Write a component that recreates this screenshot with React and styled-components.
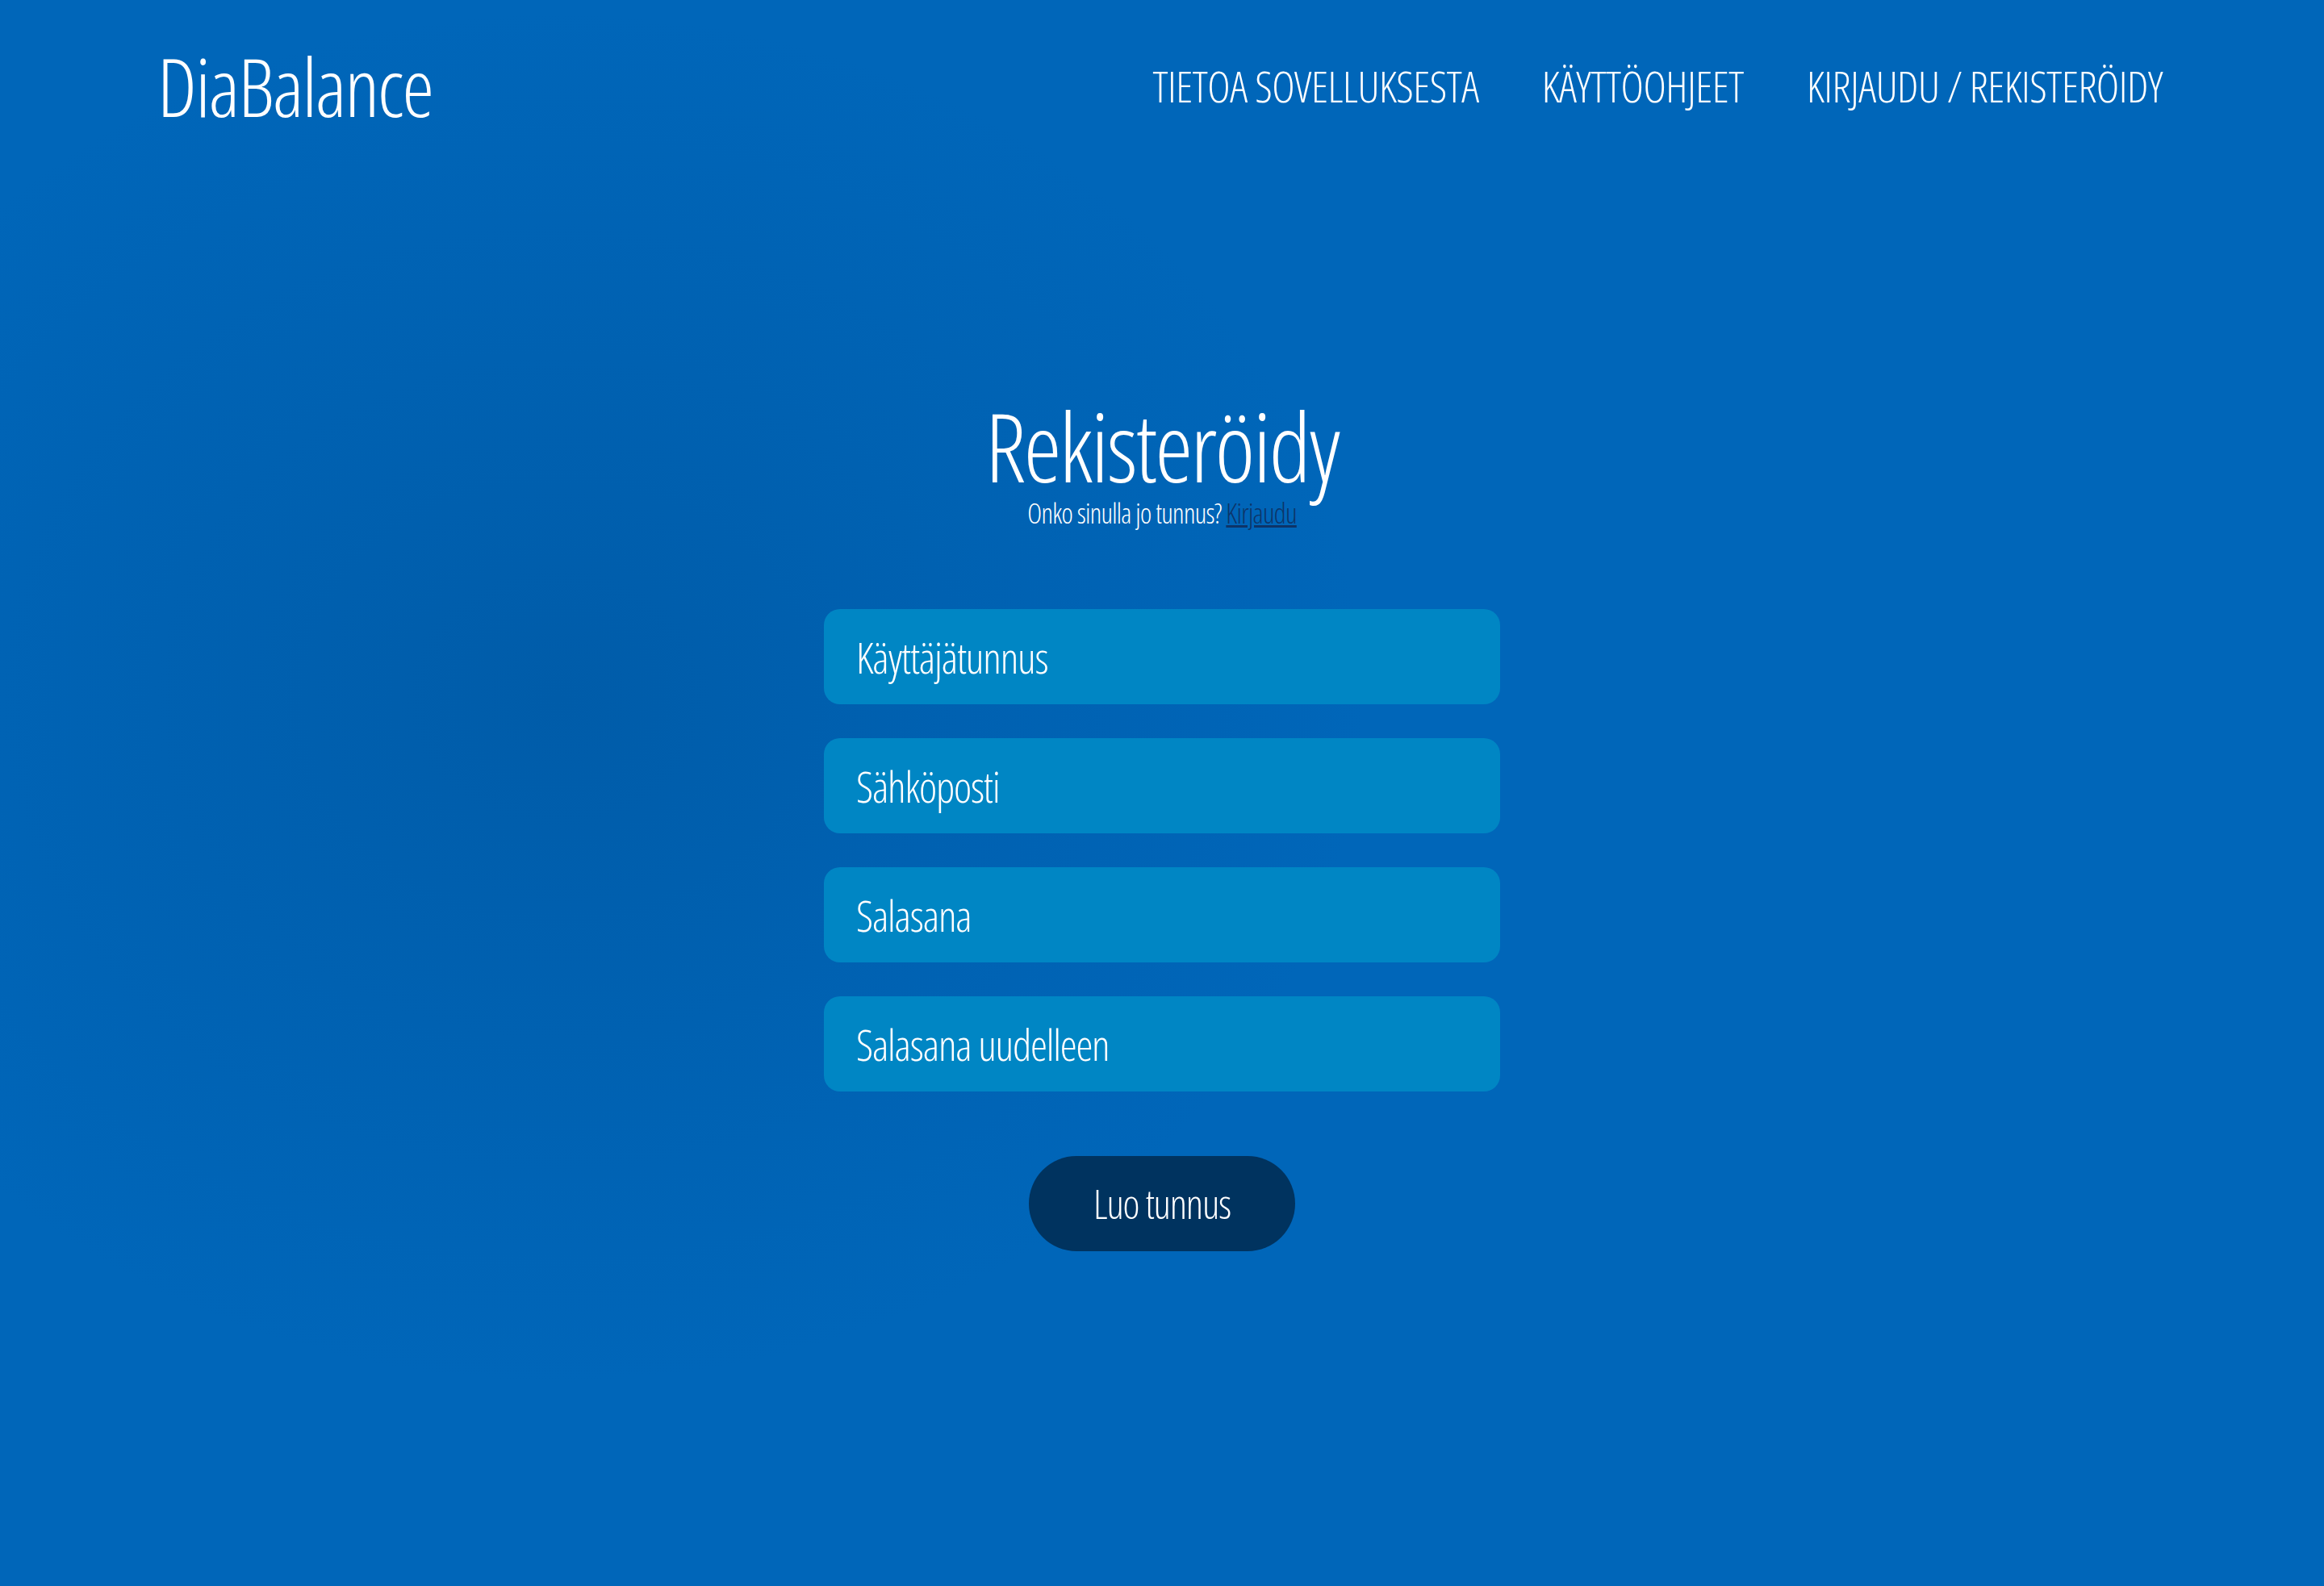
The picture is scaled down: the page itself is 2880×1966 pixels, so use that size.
import React from "react"
import styled, { createGlobalStyle } from "styled-components"

const colors = {
  page: '#0066b9',
  pageDark: '#005ca9',
  field: '#0086c4',
  button: '#00335f',
  link: '#0d3468',
  white: '#ffffff',
}

const font = `"Open Sans", "Noto Sans", "Liberation Sans", sans-serif`

const GlobalStyle = createGlobalStyle`
  html, body {
    margin: 0;
    padding: 0;
  }
  body {
    font-family: ${font};
    font-stretch: 75%;
    font-weight: 300;
    color: ${colors.white};
    background: ${colors.page};
  }
  * {
    box-sizing: border-box;
  }
`

const Page = styled.div`
  min-height: 1966px;
  background:
    radial-gradient(ellipse 1000px 850px at 24% 44%, ${colors.pageDark} 0%, rgba(0, 92, 169, 0) 100%),
    ${colors.page};
`

const Header = styled.header`
  height: 212px;
  padding: 0 200px 0 195px;
  display: flex;
  flex-direction: row;
  align-items: center;
  justify-content: space-between;
`

const Logo = styled.div`
  font-size: 100px;
  line-height: 1;
  letter-spacing: -2px;
`

const Nav = styled.nav`
  display: flex;
  flex-direction: row;
  gap: 78px;
`

const NavLink = styled.a`
  font-size: 54px;
  line-height: 1;
  letter-spacing: -0.5px;
  text-transform: uppercase;
  color: ${colors.white};
  text-decoration: none;
  cursor: pointer;
`

const Main = styled.main`
  display: flex;
  flex-direction: column;
  align-items: center;
  padding-top: 282px;
`

const Title = styled.h1`
  margin: 0;
  font-size: 118px;
  font-weight: 300;
  line-height: 1;
  letter-spacing: -2.5px;
`

const Subtitle = styled.p`
  margin: 7px 0 0;
  font-size: 34px;
  line-height: 1;
  letter-spacing: -0.7px;
`

const SubLink = styled.a`
  color: ${colors.link};
  text-decoration: underline;
  cursor: pointer;
`

const Form = styled.form`
  margin-top: 102px;
  display: flex;
  flex-direction: column;
  align-items: center;
  gap: 42px;
`

const Field = styled.input`
  width: 838px;
  height: 118px;
  padding: 0 40px;
  border: none;
  border-radius: 20px;
  background: ${colors.field};
  color: ${colors.white};
  font-family: ${font};
  font-stretch: 75%;
  font-weight: 300;
  font-size: 53px;
  letter-spacing: -1.2px;
  outline: none;

  &::placeholder {
    color: ${colors.white};
    opacity: 1;
  }
`

const SubmitButton = styled.button`
  margin-top: 38px;
  width: 330px;
  height: 118px;
  border: none;
  border-radius: 59px;
  background: ${colors.button};
  color: ${colors.white};
  font-family: ${font};
  font-stretch: 75%;
  font-weight: 300;
  font-size: 50px;
  letter-spacing: -1.2px;
  cursor: pointer;
`

const fields = [
  { name: 'username', type: 'text', placeholder: 'Käyttäjätunnus' },
  { name: 'email', type: 'email', placeholder: 'Sähköposti' },
  { name: 'password', type: 'password', placeholder: 'Salasana' },
  { name: 'password2', type: 'password', placeholder: 'Salasana uudelleen' },
]

const App = () => (
  <Page>
    <GlobalStyle />
    <Header>
      <Logo>DiaBalance</Logo>
      <Nav>
        <NavLink>Tietoa sovelluksesta</NavLink>
        <NavLink>Käyttöohjeet</NavLink>
        <NavLink>Kirjaudu / Rekisteröidy</NavLink>
      </Nav>
    </Header>
    <Main>
      <Title>Rekisteröidy</Title>
      <Subtitle>
        Onko sinulla jo tunnus? <SubLink>Kirjaudu</SubLink>
      </Subtitle>
      <Form onSubmit={e => e.preventDefault()}>
        {fields.map(f => (
          <Field key={f.name} name={f.name} type={f.type} placeholder={f.placeholder} />
        ))}
        <SubmitButton type="submit">Luo tunnus</SubmitButton>
      </Form>
    </Main>
  </Page>
)

export default App
